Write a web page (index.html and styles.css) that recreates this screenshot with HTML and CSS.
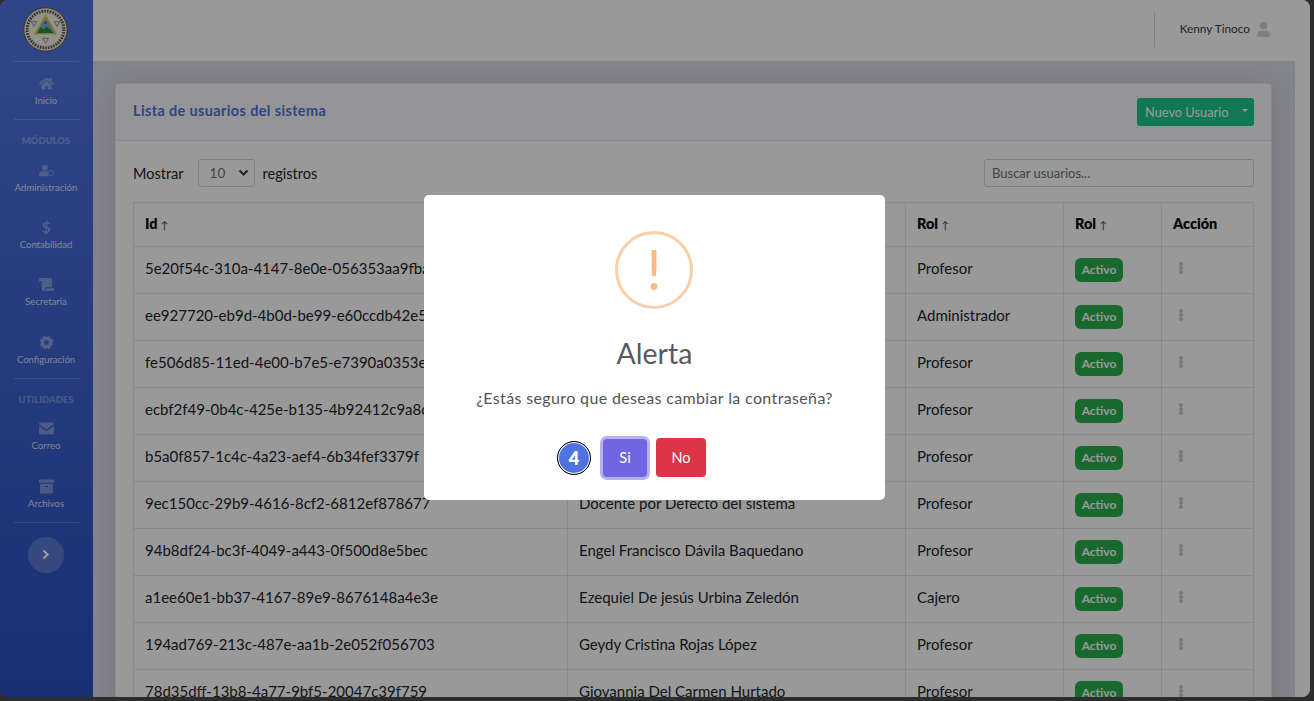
FILE: index.html
```html
<!DOCTYPE html>
<html lang="es">
<head>
  <meta charset="UTF-8">
  <title>Usuarios</title>
  <link rel="stylesheet" href="styles.css">
</head>
<body>
<div class="shell">
  <aside class="sidebar">
    <div class="brand">
      <svg width="45" height="45" viewBox="0 0 46 46">
        <circle cx="23" cy="23" r="22.200" fill="#ecebdd" stroke="#55554a" stroke-width="1"/>
        <circle cx="23" cy="23" r="18.800" fill="none" stroke="#55554a" stroke-width="3" stroke-dasharray="1.600 1.200"/>
        <circle cx="23" cy="23" r="16" fill="#f3f2e8"/>
        <path d="M23 7.500L35 28H11Z" fill="#e8c437"/>
        <path d="M23 11L32 26.500H14Z" fill="#6cb4e2"/>
        <path d="M14.500 26.500L18 20.500L21 23L24 20L28 23L31.500 26.500Z" fill="#2f8a3f"/>
        <circle cx="23" cy="16" r="1.300" fill="#c0392b"/>
        <path d="M8.500 15L14 15L11.200 20ZM32 15L37.500 15L34.700 20ZM20 32L26 32L23 37Z" fill="none" stroke="#777" stroke-width=".8"/>
      </svg>
    </div>
    <hr class="side-line">
    <a class="side-item">
      <svg class="side-icon" viewBox="0 0 576 512"><path d="M280.37 148.26L96 300.11V464a16 16 0 0 0 16 16l112.06-.29a16 16 0 0 0 15.92-16V368a16 16 0 0 1 16-16h64a16 16 0 0 1 16 16v95.64a16 16 0 0 0 16 16.05L464 480a16 16 0 0 0 16-16V300L295.67 148.26a12.19 12.19 0 0 0-15.3 0zM571.6 251.47L488 182.56V44.05a12 12 0 0 0-12-12h-56a12 12 0 0 0-12 12v72.61L318.47 43a48 48 0 0 0-61 0L4.34 251.47a12 12 0 0 0-1.6 16.9l25.5 31A12 12 0 0 0 45.15 301l235.22-193.74a12.19 12.19 0 0 1 15.3 0L530.9 301a12 12 0 0 0 16.9-1.6l25.5-31a12 12 0 0 0-1.7-16.93z"/></svg>
      <span>Inicio</span>
    </a>
    <hr class="side-line">
    <div class="side-head">MÓDULOS</div>
    <a class="side-item">
      <svg class="side-icon" viewBox="0 0 18 14"><circle cx="7" cy="3.500" r="3.500"/><path d="M0 12.500C0 9.800 2 8 4.500 8h5c.6 0 1.100.1 1.600.3V14H1.500C.7 14 0 13.300 0 12.500z"/><circle cx="14" cy="10" r="3" fill="none" stroke="#6f8de6" stroke-width="1.800"/></svg>
      <span>Administración</span>
    </a>
    <a class="side-item">
      <div class="side-dollar">$</div>
      <span>Contabilidad</span>
    </a>
    <a class="side-item">
      <svg class="side-icon" viewBox="0 0 16 14"><path d="M0 1.500C0 .7.700 0 1.500 0s1.500.7 1.500 1.500V3.500H0z"/><path d="M3 0h9c1 0 1.800.8 1.800 1.800V10H6.500v2.300c0 .9-.8 1.700-1.700 1.700S3 13.200 3 12.300z"/><path d="M7.500 11H16v1.500c0 .8-.7 1.500-1.500 1.500H6.800c.4-.4.700-1 .7-1.700z"/></svg>
      <span>Secretaría</span>
    </a>
    <a class="side-item">
      <svg class="side-icon" viewBox="0 0 14 14"><circle cx="7" cy="7" r="5.300" fill="none" stroke="#6f8de6" stroke-width="2.600" stroke-dasharray="2.800 1.360"/><path fill-rule="evenodd" d="M7 1.800a5.200 5.200 0 1 1 0 10.400A5.200 5.200 0 0 1 7 1.800zm0 3.200a2 2 0 1 0 0 4 2 2 0 0 0 0-4z"/></svg>
      <span>Configuración</span>
    </a>
    <hr class="side-line">
    <div class="side-head">UTILIDADES</div>
    <a class="side-item">
      <svg class="side-icon" viewBox="0 0 14 11"><path d="M0 1.300C0 .6.600 0 1.300 0h11.400c.7 0 1.300.6 1.300 1.300v.3L7 6.300 0 1.600z"/><path d="M0 3.100L7 7.800l7-4.700v6.600c0 .7-.6 1.300-1.300 1.300H1.300C.6 11 0 10.400 0 9.700z"/></svg>
      <span>Correo</span>
    </a>
    <a class="side-item">
      <svg class="side-icon" viewBox="0 0 14 13"><path d="M.6 0h12.800c.3 0 .6.3.6.6V3H0V.6C0 .3.300 0 .6 0z"/><path fill-rule="evenodd" d="M1 4h12v8c0 .6-.4 1-1 1H2c-.6 0-1-.4-1-1zm4.500 2v1h3V6z"/></svg>
      <span>Archivos</span>
    </a>
    <hr class="side-line">
    <button class="side-toggle">
      <svg width="8" height="11" viewBox="0 0 8 11"><path d="M1.500 1.500L5.500 5.500L1.500 9.500" fill="none" stroke="#fff" stroke-width="2.200"/></svg>
    </button>
  </aside>

  <div class="main">
    <header class="topbar">
      <div class="top-line"></div>
      <span class="user-name">Kenny Tinoco</span>
      <svg class="user-icon" viewBox="0 0 14 16" preserveAspectRatio="none"><circle cx="7" cy="4" r="4"/><path d="M0 14.500C0 11.500 2.200 9.200 5 9.200h4c2.800 0 5 2.300 5 5.300 0 .8-.7 1.500-1.500 1.500h-11C.7 16 0 15.300 0 14.500z"/></svg>
    </header>
    <div class="body-row">
      <div class="content">
        <section class="card">
          <div class="card-head">
            <h6 class="card-title">Lista de usuarios del sistema</h6>
            <button class="btn-new">Nuevo Usuario <i class="caret"></i></button>
          </div>
          <div class="card-body">
            <div class="filters">
              <label class="show-len">Mostrar
                <span class="fake-select">10
                  <svg width="11" height="8" viewBox="0 0 11 8"><path d="M1.500 1.500L5.500 5.500L9.500 1.500" fill="none" stroke="#3a3b45" stroke-width="2"/></svg>
                </span>
                registros</label>
              <input class="search" placeholder="Buscar usuarios...">
            </div>
            <table class="users">
              <colgroup><col class="c1"><col class="c2"><col class="c3"><col class="c4"><col></colgroup>
              <thead>
                <tr><th>Id <i>↑</i></th><th>Nombre <i>↑</i></th><th>Rol <i>↑</i></th><th>Rol <i>↑</i></th><th>Acción</th></tr>
              </thead>
              <tbody>
                <tr><td>5e20f54c-310a-4147-8e0e-056353aa9fba</td><td></td><td>Profesor</td><td><b class="badge">Activo</b></td><td><i class="dots"></i></td></tr>
                <tr><td>ee927720-eb9d-4b0d-be99-e60ccdb42e5a</td><td></td><td>Administrador</td><td><b class="badge">Activo</b></td><td><i class="dots"></i></td></tr>
                <tr><td>fe506d85-11ed-4e00-b7e5-e7390a0353e1</td><td></td><td>Profesor</td><td><b class="badge">Activo</b></td><td><i class="dots"></i></td></tr>
                <tr><td>ecbf2f49-0b4c-425e-b135-4b92412c9a8c</td><td></td><td>Profesor</td><td><b class="badge">Activo</b></td><td><i class="dots"></i></td></tr>
                <tr><td>b5a0f857-1c4c-4a23-aef4-6b34fef3379f</td><td></td><td>Profesor</td><td><b class="badge">Activo</b></td><td><i class="dots"></i></td></tr>
                <tr><td>9ec150cc-29b9-4616-8cf2-6812ef878677</td><td>Docente por Defecto del sistema</td><td>Profesor</td><td><b class="badge">Activo</b></td><td><i class="dots"></i></td></tr>
                <tr><td>94b8df24-bc3f-4049-a443-0f500d8e5bec</td><td>Engel Francisco Dávila Baquedano</td><td>Profesor</td><td><b class="badge">Activo</b></td><td><i class="dots"></i></td></tr>
                <tr><td>a1ee60e1-bb37-4167-89e9-8676148a4e3e</td><td>Ezequiel De jesús Urbina Zeledón</td><td>Cajero</td><td><b class="badge">Activo</b></td><td><i class="dots"></i></td></tr>
                <tr><td>194ad769-213c-487e-aa1b-2e052f056703</td><td>Geydy Cristina Rojas López</td><td>Profesor</td><td><b class="badge">Activo</b></td><td><i class="dots"></i></td></tr>
                <tr><td>78d35dff-13b8-4a77-9bf5-20047c39f759</td><td>Giovannia Del Carmen Hurtado</td><td>Profesor</td><td><b class="badge">Activo</b></td><td><i class="dots"></i></td></tr>
              </tbody>
            </table>
          </div>
        </section>
      </div>
      <div class="scroll-track"></div>
    </div>
  </div>

  <div class="overlay">
    <div class="alert-box">
      <div class="alert-icon"><span>!</span></div>
      <h2 class="alert-title">Alerta</h2>
      <p class="alert-text">¿Estás seguro que deseas cambiar la contraseña?</p>
      <div class="alert-actions">
        <div class="timer">4</div>
        <button class="btn-si">Si</button>
        <button class="btn-no">No</button>
      </div>
    </div>
  </div>
</div>
</body>
</html>
```
FILE: styles.css
```css
* { box-sizing: border-box; }
html, body { margin: 0; height: 100%; overflow: hidden; }
body {
  background-color: #2d2d2d;
  font-family: "Lato", "Noto Sans", sans-serif;
  font-size: 15px;
  color: #212529;
}
.shell {
  position: relative;
  display: flex;
  width: 1310px;
  height: 697px;
  border-radius: 8px;
  overflow: hidden;
}

/* sidebar */
.sidebar {
  width: 93px;
  flex-shrink: 0;
  background: linear-gradient(180deg, #4e73df 10%, #2a50c2 100%);
  display: flex;
  flex-direction: column;
  align-items: center;
  color: rgba(255,255,255,.8);
}
.brand { height: 61px; padding-top: 7px; margin-right: 2px; }
.side-line {
  width: 65px;
  height: 1px;
  margin: 0 1px 0 0;
  border: 0;
  background-color: rgba(255,255,255,.2);
  flex-shrink: 0;
}
.side-item {
  width: 100%;
  height: 57.25px;
  flex-shrink: 0;
  display: flex;
  flex-direction: column;
  align-items: center;
  padding: 14px 1px 0 0;
  font-size: 9.500px;
  line-height: 14px;
}
.side-item span { margin-top: 3px; }
.side-icon { width: 15px; height: 15px; fill: rgba(255,255,255,.35); }
.side-dollar {
  height: 15px;
  font-size: 15px;
  line-height: 15px;
  font-weight: 900;
  color: rgba(255,255,255,.35);
}
.side-head {
  height: 28.5px;
  flex-shrink: 0;
  padding: 14px 1px 0 0;
  font-size: 9.400px;
  line-height: 14px;
  font-weight: 800;
  color: rgba(255,255,255,.32);
}
.side-toggle {
  width: 36px;
  height: 36px;
  margin: 14px 1px 0 0;
  border: 0;
  border-radius: 50%;
  background-color: rgba(255,255,255,.2);
  display: flex;
  align-items: center;
  justify-content: center;
}

/* topbar */
.main { flex: 1; display: flex; flex-direction: column; min-width: 0; }
.topbar {
  height: 61px;
  flex-shrink: 0;
  background-color: #fff;
  display: flex;
  align-items: center;
  justify-content: flex-end;
  padding: 0 40px 3px 0;
  font-size: 11.800px;
  color: #3a3b45;
}
.top-line { width: 1px; height: 35px; background-color: #d8d9dc; margin-right: 25px; }
.user-name { margin-bottom: 1px; }
.user-icon { width: 13px; height: 15px; margin-left: 7px; fill: #d1d3e2; }

/* content */
.body-row { flex: 1; display: flex; min-height: 0; }
.content { flex: 1; padding: 22px 23px 0 22px; background-color: #dcdde8; overflow: hidden; }
.scroll-track { width: 15px; background-color: #fff; }
.card {
  background-color: #fff;
  border: 1px solid #e3e6f0;
  border-radius: 5px;
  box-shadow: 0 2px 28px 0 rgba(58,59,69,.15);
}
.card-head {
  height: 57px;
  display: flex;
  align-items: center;
  justify-content: space-between;
  padding: 0 17px;
  background-color: #f8f9fc;
  border-bottom: 1px solid #e3e6f0;
}
.card-title { margin: 0 0 3px; font-size: 14.400px; font-weight: 700; letter-spacing: .4px; color: #4e73df; }
.btn-new {
  width: 117px;
  height: 28px;
  border: 0;
  border-radius: 3px;
  background-color: #1cc88a;
  color: #fff;
  font: inherit;
  font-size: 12.800px;
  text-align: left;
  padding: 0 6px 0 8px;
  display: flex;
  align-items: center;
  justify-content: space-between;
}
.caret {
  margin-top: -3px;
  border-top: 3px solid #fff;
  border-left: 3px solid transparent;
  border-right: 3px solid transparent;
}
.card-body { padding: 18px 17px 0; }
.filters { display: flex; align-items: center; justify-content: space-between; height: 28px; }
.show-len { display: flex; align-items: center; gap: 7px; font-size: 14.500px; }
.fake-select {
  width: 57px;
  height: 28px;
  margin: 0 1px 0 7px;
  border: 1px solid #d1d3e2;
  border-radius: 3px;
  display: flex;
  align-items: center;
  justify-content: space-between;
  padding: 0 5px 0 11px;
  font-size: 13.500px;
  color: #6e707e;
}
.search {
  width: 270px;
  height: 28px;
  border: 1px solid #d1d3e2;
  border-radius: 3px;
  padding: 0 7px;
  font: inherit;
  font-size: 13px;
}
.search::placeholder { color: #6e707e; }

/* table */
.users {
  width: 1121px;
  margin-top: 15px;
  border-collapse: collapse;
  table-layout: fixed;
}
.c1 { width: 434px; }
.c2 { width: 338px; }
.c3 { width: 158px; }
.c4 { width: 98px; }
.users th, .users td {
  border: 1px solid #e3e6f0;
  padding: 11px;
  text-align: left;
  vertical-align: top;
  white-space: nowrap;
  overflow: hidden;
}
.users th { height: 44px; padding-top: 12px; font-weight: 800; font-size: 14.400px; color: #111; }
.users th i { font-style: normal; font-weight: 400; font-size: 10.500px; color: #444; }
.users td { height: 47px; line-height: 20px; }
.badge {
  display: block;
  width: 48px;
  height: 24px;
  border-radius: 6px;
  background-color: #2ab04e;
  color: #fff;
  font-size: 12px;
  line-height: 24px;
  text-align: center;
}
.dots {
  display: block;
  width: 4px;
  height: 4px;
  margin: 4px 0 0 6px;
  border-radius: 50%;
  background-color: #c4c6d6;
  box-shadow: 0 4px 0 #c4c6d6, 0 8px 0 #c4c6d6;
}

/* alert */
.overlay {
  position: absolute;
  inset: 0;
  display: flex;
  align-items: center;
  justify-content: center;
  background-color: rgba(0,0,0,.4);
}
.alert-box {
  width: 461px;
  height: 305px;
  margin: 0 1px 2px 0;
  padding-top: 36px;
  background-color: #fff;
  border-radius: 5px;
  text-align: center;
  color: #545454;
}
.alert-icon {
  width: 78px;
  height: 78px;
  margin: 0 0 0 191px;
  border: 3.500px solid #facea8;
  border-radius: 50%;
  color: #f8bb86;
  font-size: 56px;
  line-height: 70px;
  font-weight: 400;
}
.alert-title {
  margin: 24px 0 0;
  font-size: 28.500px;
  line-height: 40px;
  font-weight: 400;
  color: #595959;
}
.alert-text { margin: 13px 0 0; font-size: 16px; line-height: 24px; letter-spacing: .36px; }
.alert-actions {
  display: flex;
  align-items: center;
  justify-content: center;
  gap: 9px;
  margin-top: 28px;
  padding-right: 46px;
}
.timer {
  width: 34px;
  height: 34px;
  margin-right: 3px;
  border: 1px solid #000;
  border-radius: 50%;
  background-color: #4e73df;
  box-shadow: inset 0 0 0 1px #fff;
  color: #fff;
  font-size: 18px;
  font-weight: 800;
  line-height: 32px;
}
.btn-si, .btn-no {
  height: 39px;
  border: 0;
  border-radius: 4px;
  color: #fff;
  font: inherit;
  font-size: 14.500px;
}
.btn-si { width: 44px; height: 38px; background-color: #7066e0; box-shadow: 0 0 0 3px rgba(112,102,224,.5); }
.btn-no { width: 50px; background-color: #dc3545; }
```
